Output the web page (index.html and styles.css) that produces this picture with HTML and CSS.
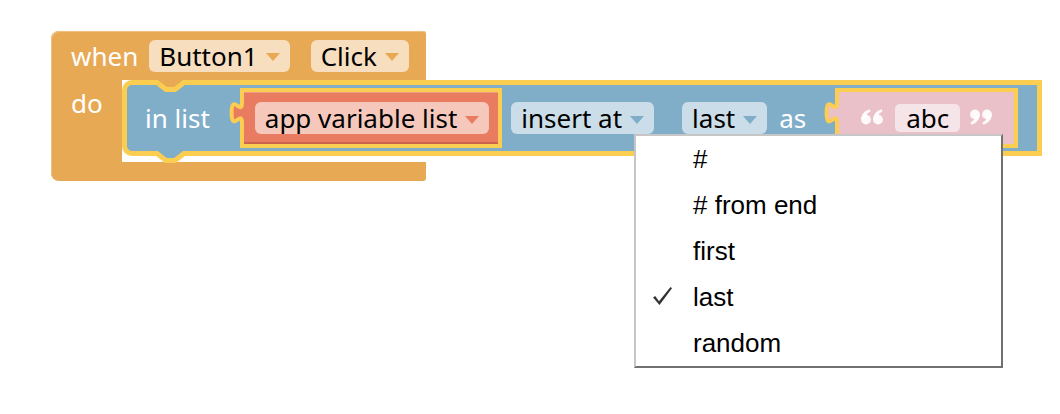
FILE: index.html
```html
<!DOCTYPE html>
<html>
<head>
<meta charset="utf-8">
<link rel="stylesheet" href="styles.css">
</head>
<body>
<div class="ws">
  <div class="event">
    <div class="ev-head">
      <span class="lbl">when</span>
      <span class="field f-orange first">Button1<i class="tri"></i></span>
      <span class="field f-orange second">Click<i class="tri"></i></span>
    </div>
    <div class="ev-body">
      <div class="do-col"><span class="lbl">do</span></div>
      <div class="cavity">
        <div class="stmt">
          <svg class="notch-top" width="40" height="14" viewBox="0 0 40 14">
            <path d="M7,0 L7,2.5 L16,9.5 L25,9.5 L34,2.5 L34,0 Z" fill="#E8A955"/>
            <path d="M0,2.5 L7,2.5 L16,9.5 L25,9.5 L34,2.5 L40,2.5" fill="none" stroke="#FBCD50" stroke-width="5"/>
          </svg>
          <span class="lbl">in list</span>
          <div class="val red">
            <svg class="tab" width="20" height="24" viewBox="0 0 20 24">
              <path d="M20,2 L18,2 c0,13 -10.4,-10.4 -10.4,9.75 s10.4,-3.25 10.4,9.75 L20,21.5 Z" fill="#E97C60"/>
              <path d="M18,0 L18,2 c0,13 -10.4,-10.4 -10.4,9.75 s10.4,-3.25 10.4,9.75 L18,24" fill="none" stroke="#FBCD50" stroke-width="4"/>
            </svg>
            <span class="field f-red">app variable list<i class="tri"></i></span>
          </div>
          <span class="field f-blue insert">insert at<i class="tri"></i></span>
          <span class="field f-blue last">last<i class="tri"></i></span>
          <span class="lbl as">as</span>
          <div class="val pink">
            <svg class="tab" width="20" height="24" viewBox="0 0 20 24">
              <path d="M20,2 L18,2 c0,13 -10.4,-10.4 -10.4,9.75 s10.4,-3.25 10.4,9.75 L20,21.5 Z" fill="#EAC1C8"/>
              <path d="M18,0 L18,2 c0,13 -10.4,-10.4 -10.4,9.75 s10.4,-3.25 10.4,9.75 L18,24" fill="none" stroke="#FBCD50" stroke-width="4"/>
            </svg>
            <svg class="quote" width="22" height="16" viewBox="0 0 22 16">
              <g fill="#fff" fill-opacity="0.92">
                <circle cx="5" cy="10.6" r="4.9"/>
                <path d="M0.2,11 C0.2,5.5 3.3,1.8 8.8,0.3 L9.5,2.6 C6.7,3.8 5.2,5.8 5.2,8 Z"/>
                <circle cx="17" cy="10.6" r="4.9"/>
                <path d="M12.2,11 C12.2,5.5 15.3,1.8 20.8,0.3 L21.5,2.6 C18.7,3.8 17.2,5.8 17.2,8 Z"/>
              </g>
            </svg>
            <span class="abc">abc</span>
            <svg class="quote close" width="22" height="16" viewBox="0 0 22 16">
              <g fill="#fff" fill-opacity="0.92" transform="rotate(180 11 8)">
                <circle cx="5" cy="10.6" r="4.9"/>
                <path d="M0.2,11 C0.2,5.5 3.3,1.8 8.8,0.3 L9.5,2.6 C6.7,3.8 5.2,5.8 5.2,8 Z"/>
                <circle cx="17" cy="10.6" r="4.9"/>
                <path d="M12.2,11 C12.2,5.5 15.3,1.8 20.8,0.3 L21.5,2.6 C18.7,3.8 17.2,5.8 17.2,8 Z"/>
              </g>
            </svg>
          </div>
          <svg class="notch-bottom" width="40" height="16" viewBox="0 0 40 16">
            <path d="M7,0 L7,5.5 L16,12.5 L25,12.5 L34,5.5 L34,0 Z" fill="#80AEC8"/>
            <path d="M0,5.5 L7,5.5 L16,12.5 L25,12.5 L34,5.5 L40,5.5" fill="none" stroke="#FBCD50" stroke-width="5"/>
          </svg>
        </div>
      </div>
    </div>
    <div class="ev-foot"></div>
  </div>

  <div class="menu">
    <div class="item"><span class="gutter"></span><span>#</span></div>
    <div class="item"><span class="gutter"></span><span># from end</span></div>
    <div class="item"><span class="gutter"></span><span>first</span></div>
    <div class="item"><span class="gutter"><svg class="check" width="19" height="18" viewBox="0 0 19 18"><path d="M0,10.5 L2.2,9 L6,14.2 L17.5,0 L19,1.2 L6.5,18 Z" fill="#333"/></svg></span><span>last</span></div>
    <div class="item"><span class="gutter"></span><span>random</span></div>
  </div>
</div>
</body>
</html>
```

FILE: styles.css
```css
body {
  margin: 0;
  background: #fff;
  font-family: "Noto Sans", Lato, sans-serif;
}

.ws {
  position: relative;
  width: 1060px;
  height: 414px;
  padding: 31px 0 0 51px;
  box-sizing: border-box;
  overflow: hidden;
}

.event {
  width: 375px;
  background: #E8A955;
  border-radius: 8px 3px 3px 8px;
  display: flex;
  flex-direction: column;
  box-shadow: inset 1px 1px 0 #EEBE7C;
}

.ev-head {
  height: 49px;
  display: flex;
  align-items: center;
  padding-left: 20px;
}

.lbl {
  color: #fff;
  font-size: 26px;
  line-height: 32px;
  white-space: nowrap;
}

.field {
  display: inline-flex;
  align-items: center;
  height: 32px;
  padding: 0 10px;
  border-radius: 6px;
  font-size: 26px;
  line-height: 30px;
  color: #000;
  gap: 8px;
  box-sizing: border-box;
  white-space: nowrap;
  flex: none;
}

.tri {
  width: 0;
  height: 0;
  border-left: 7.5px solid transparent;
  border-right: 7.5px solid transparent;
  border-top: 8px solid;
  margin-top: 3px;
}

.f-orange { background: #F7DEBF; }
.f-orange .tri { border-top-color: #E8A955; }
.f-red { background: #F6C8BB; }
.f-red .tri { border-top-color: #E97C60; }
.f-blue { background: #CADDE8; }
.f-blue .tri { border-top-color: #80AEC8; }

.ev-head .first { margin-left: 11px; }
.ev-head .second { margin-left: 21px; }

.ev-body {
  display: flex;
  height: 82px;
}

.do-col {
  width: 71px;
  flex: none;
  padding: 7px 0 0 20px;
  box-sizing: border-box;
}

.cavity {
  flex: 1;
  min-width: 0;
  background: #fff;
}

.stmt {
  position: relative;
  width: 920px;
  height: 76px;
  box-sizing: border-box;
  border: 5px solid #FBCD50;
  border-radius: 10px 0 0 10px;
  background: #80AEC8;
  display: flex;
  align-items: center;
  padding: 0 15px 0 18px;
}

.notch-top {
  position: absolute;
  left: 23px;
  top: -5px;
}

.notch-bottom {
  position: absolute;
  left: 23px;
  top: 63px;
}

.val {
  position: relative;
  display: flex;
  align-items: center;
  height: 60px;
  box-sizing: border-box;
  border: 4px solid #FBCD50;
  flex: none;
}

.tab {
  position: absolute;
  left: -20px;
  top: 9px;
}

.red {
  background: #E97C60;
  padding: 0 9px 0 11px;
  margin-left: 30px;
  box-shadow: inset 0 -2px 0 #CB644C, inset 0 1px 0 #EF9A82;
}

.insert { margin-left: 9px; }
.last { margin-left: 28px; }
.as { margin-left: 12px; }

.pink {
  background: #EAC1C8;
  padding: 0 22px;
  margin-left: 29px;
}

.quote {
  display: block;
  flex: none;
  margin-top: -2px;
}

.abc {
  display: flex;
  align-items: center;
  height: 28px;
  padding: 0 11px;
  margin: 0 10px 0 12px;
  border-radius: 5px;
  background: #F5E4E8;
  font-size: 26px;
  line-height: 28px;
  color: #000;
}

.ev-foot {
  height: 19px;
}

.menu {
  position: absolute;
  left: 634px;
  top: 134px;
  width: 369px;
  height: 234px;
  box-sizing: border-box;
  background: #fff;
  border: 2px solid #C6C6C6;
  border-right-color: #717171;
  border-bottom-color: #717171;
  font-family: "Liberation Sans", Arial, sans-serif;
  font-size: 26px;
  color: #000;
}

.item {
  display: flex;
  align-items: center;
  height: 46px;
  line-height: 46px;
}

.gutter {
  width: 57px;
  flex: none;
  box-sizing: border-box;
  padding-left: 17px;
  display: flex;
  align-items: center;
}

.check {
  display: block;
  margin-top: -2px;
}
```
